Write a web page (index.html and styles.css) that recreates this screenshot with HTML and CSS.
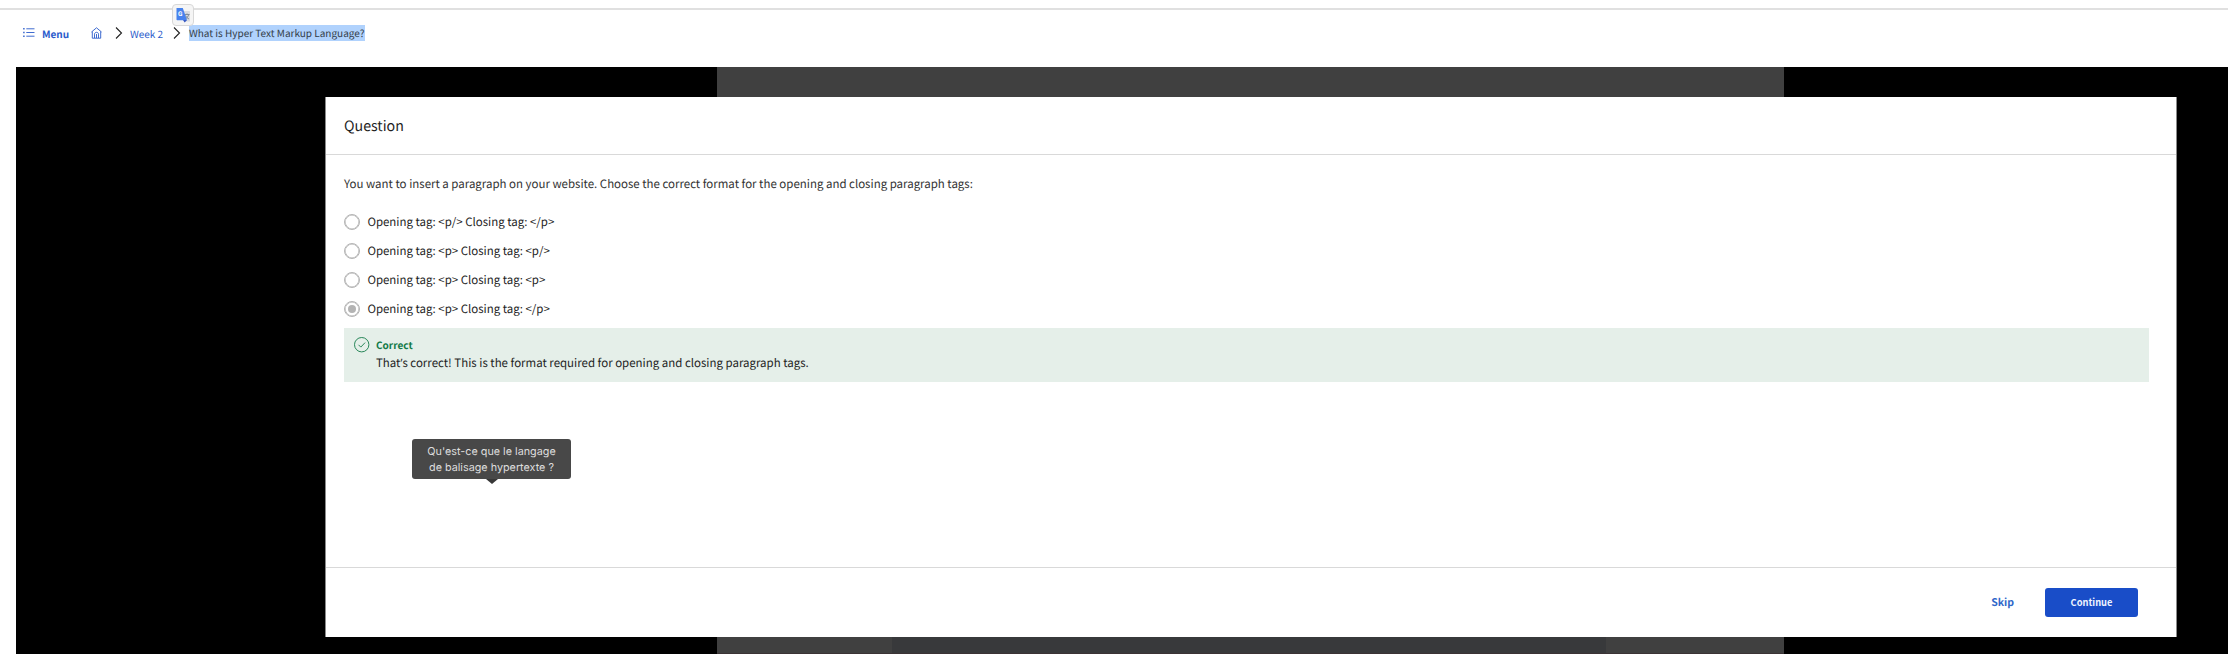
FILE: index.html
```html
<!DOCTYPE html>
<html lang="en">
<head>
<meta charset="utf-8">
<title>What is Hyper Text Markup Language?</title>
<link rel="stylesheet" href="styles.css">
</head>
<body>
<header class="topbar">
  <a class="menu">
    <svg width="12" height="12" viewBox="0 0 12 12" fill="none" stroke="#2a5bcb"><path d="M3.3 1.8h8.2M3.3 5.5h8.2M3.3 9.2h8.2" stroke-width=".9"/><path d="M.2 1.8h1.4M.2 5.5h1.4M.2 9.2h1.4" stroke-width="1.4"/></svg>
    <span>Menu</span>
  </a>
  <nav class="crumbs">
    <svg class="home" width="11" height="12" viewBox="0 0 11 12" fill="none" stroke="#2a5bcb" stroke-width=".9"><path d="M.5 5 5.5.8l5 4.200M1.300 4.500v6.700h8.400V4.500M3.500 11V7.200c0-2.500 4-2.500 4 0V11M5.500 7v4"/></svg>
    <svg class="chev" width="8" height="12" viewBox="0 0 8 12" fill="none" stroke="#222" stroke-width="1.100"><path d="m1 .5 5.500 5.500L1 11.500"/></svg>
    <a class="week">Week 2</a>
    <svg class="chev chev2" width="8" height="12" viewBox="0 0 8 12" fill="none" stroke="#222" stroke-width="1.100"><path d="m1 .5 5.500 5.500L1 11.500"/></svg>
    <span class="current">What is Hyper Text Markup Language?</span>
  </nav>
  <div class="translate">
    <svg width="16" height="16" viewBox="0 0 16 16"><path d="M6 4h8.500q.5 0 .5.500V14q0 .5-.5.500H9z" fill="#d9dbdf"/><path d="M9.500 7.500h5M12 6.500v1M13.800 7.500q-.8 3-3.300 4.500M10.500 8.500q1 2.500 3.500 3.500" fill="none" stroke="#7b8794" stroke-width=".9"/><path d="M8 13h4L9.700 15.500z" fill="#3050bd"/><path d="M1.500 1h6.300L12 13.200H2.200q-.7 0-.7-.7z" fill="#4782ed"/><text x="3" y="9.300" class="g">G</text></svg>
  </div>
</header>
<main class="stage">
  <div class="video"><div class="caption"></div></div>
  <section class="modal">
    <h1 class="title">Question</h1>
    <div class="body">
      <p class="prompt">You want to insert a paragraph on your website. Choose the correct format for the opening and closing paragraph tags:</p>
      <div class="option"><i class="radio"></i><span>Opening tag: &lt;p/&gt; Closing tag: &lt;/p&gt;</span></div>
      <div class="option"><i class="radio"></i><span>Opening tag: &lt;p&gt; Closing tag: &lt;p/&gt;</span></div>
      <div class="option"><i class="radio"></i><span>Opening tag: &lt;p&gt; Closing tag: &lt;p&gt;</span></div>
      <div class="option"><i class="radio checked"></i><span>Opening tag: &lt;p&gt; Closing tag: &lt;/p&gt;</span></div>
      <div class="feedback">
        <svg width="16" height="16" viewBox="0 0 16 16" fill="none" stroke="#137a48" stroke-width=".9"><circle cx="7.700" cy="7.700" r="7.200"/><path d="m4.500 7.800 2.300 2.300 4.300-4.500"/></svg>
        <div><div class="verdict">Correct</div><div class="explain">That<span class="quote">’</span>s correct! This is the format required for opening and closing paragraph tags.</div></div>
      </div>
    </div>
    <footer class="actions">
      <a class="skip">Skip</a>
      <button class="continue">Continue</button>
    </footer>
  </section>
</main>
<div class="tooltip">Qu'est-ce que le langage<br>de balisage hypertexte ?</div>
</body>
</html>
```
FILE: styles.css
```css
* { box-sizing: border-box; }
body {
  margin: 0;
  height: 654px;
  overflow: hidden;
  position: relative;
  background: #fff;
  color: #1f1f1f;
  font-family: "Noto Sans CJK SC", "Open Sans", sans-serif;
  font-size: 11.47px;
  text-rendering: geometricPrecision;
  white-space: nowrap;
}
svg { display: block; flex: none; }
.topbar {
  position: relative;
  height: 59px;
  margin-top: 8px;
  border-top: 2px solid #e0e0e0;
  padding: 13px 0 0 23px;
  display: flex;
  align-items: flex-start;
}
.menu, .crumbs { display: flex; align-items: center; height: 20px; color: #2a5bcb; font-size: 10px; }
.menu { width: 68px; gap: 7px; font-weight: 700; }
.chev { margin-left: 13px; }
.week { margin-left: 7px; width: 34px; }
.chev2 { margin-left: 9px; }
.current { margin-left: 8px; height: 16px; line-height: 16px; background: #b0d2fd; color: #333c47; }
.translate {
  position: absolute;
  left: 172px;
  top: -6px;
  width: 22px;
  height: 22px;
  padding: 2px;
  border: 1px solid #d8d8d8;
  border-radius: 4px;
  background: #f5f5f5;
}
.g { font: 700 6.5px Roboto, sans-serif; fill: #fff; }
.stage { height: 587px; margin-left: 16px; background: #000; position: relative; padding: 30px 51px 0 309px; }
.video { position: absolute; left: 701px; top: 0; width: 1067px; height: 587px; background: #404040; border-bottom: 1px solid #3b3335; }
.caption { margin: 560px 178px 0 175px; height: 26px; background: #38393b; }
.modal {
  position: relative;
  height: 540px;
  background: #fff;
  border: solid #8a8a8a;
  border-width: 0 1px;
  display: flex;
  flex-direction: column;
}
.title { margin: 0; height: 58px; border-bottom: 1px solid #d9d9d9; padding-left: 18px; font-size: 14.2px; font-weight: 400; line-height: 58px; }
.body { flex: 1; padding: 19px 27px 0 18px; }
.prompt { margin: 0 0 18px; line-height: 20px; color: #333; }
.option { display: flex; align-items: center; gap: 7.4px; height: 20px; margin-bottom: 9px; }
.radio { width: 16px; height: 16px; border: 1px solid #b4b4b4; box-shadow: inset 0 0 0 .6px #b4b4b4; border-radius: 50%; display: flex; align-items: center; justify-content: center; }
.checked::after { content: ""; width: 8px; height: 8px; border-radius: 50%; background: #b4b4b4; }
.feedback { display: flex; gap: 6px; height: 54px; padding: 9px 10px; background: #e5efe9; }
.verdict { height: 16px; line-height: 16px; font-size: 10px; font-weight: 700; color: #137a48; }
.explain { line-height: 20px; }
.quote { font-family: "Open Sans", sans-serif; }
.actions { height: 70px; border-top: 1px solid #d9d9d9; display: flex; align-items: center; justify-content: flex-end; padding: 0 38px 1px 0; }
.skip { font-size: 10.5px; font-weight: 700; color: #3067c9; margin-right: 31px; }
.continue { width: 93px; height: 29px; border: 0; border-radius: 3px; background: #194dc8; color: #eef3ff; font-family: inherit; font-size: 9.3px; font-weight: 700; padding: 0; }
.tooltip {
  position: absolute;
  left: 412px;
  top: 439px;
  width: 159px;
  height: 40px;
  padding-top: 5px;
  border-radius: 3px;
  background: #484848;
  color: #ddd;
  font: 10.8px/16px Inter, sans-serif;
  text-align: center;
}
.tooltip::after { content: ""; position: absolute; left: 74px; top: 40px; border: 6px solid transparent; border-top: 5px solid #383838; border-bottom: 0; }
```
